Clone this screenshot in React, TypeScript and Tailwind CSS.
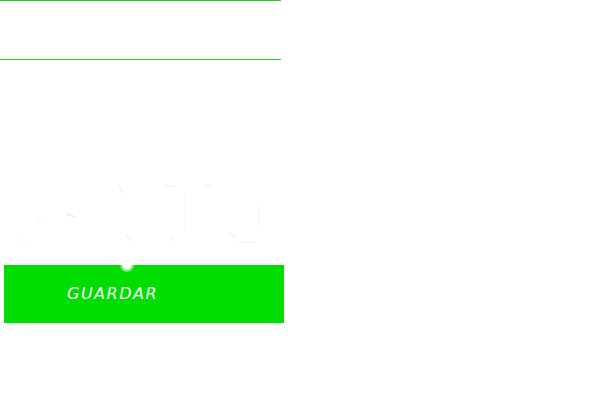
import React from 'react';

const FadedPicture: React.FC = () => (
  <svg width="250" height="70" viewBox="0 0 250 70" className="block opacity-60">
    <g fill="none" strokeWidth={2} strokeLinecap="round">
      <path d="M104 8 L108 14" stroke="#fce4ea" />
      <path d="M52 36 L60 39" stroke="#fbd9e1" />
      <path d="M112 58 L116 62" stroke="#fde6ec" />
      <path d="M8 62 L10 63" stroke="#fdeef2" />
      <path d="M22 42 L26 44" stroke="#fdf1f4" />
      <path d="M150 8 L160 8" stroke="#eef0fd" />
      <path d="M190 8 L195 8" stroke="#eceefd" />
      <path d="M244 30 L244 48" stroke="#f3f4fe" />
      <path d="M170 16 L170 50" stroke="#f6f7fe" />
      <path d="M214 55 L222 60" stroke="#f1f2fd" />
      <path d="M225 64 L240 64" stroke="#f3f4fe" />
      <path d="M155 60 L158 62" stroke="#f1f2fd" />
    </g>
  </svg>
);

const App: React.FC = () => {
  return (
    <div className="w-[288px] bg-white" style={{ fontFamily: '"DejaVu Sans", sans-serif' }}>
      <div className="h-px w-[281px] bg-[#1ccc1c]" />
      <div className="h-[58px]" />
      <div className="h-px w-[281px] bg-[#1ccc1c]" />

      <div className="pt-[118px] pl-[15px]">
        <FadedPicture />
      </div>

      <div className="relative mt-[17px] ml-1">
        <div className="absolute left-[115px] -top-[8px] h-[16px] w-[16px] rounded-full bg-[radial-gradient(circle,#ffffff_30%,rgba(255,255,255,0)_70%)]" />
        <button className="flex h-[58px] w-[280px] items-center bg-[#00dd00] pl-[63px] text-[16px] italic tracking-[1.5px] text-white">
          GUARDAR
        </button>
      </div>
    </div>
  );
};

export default App;
